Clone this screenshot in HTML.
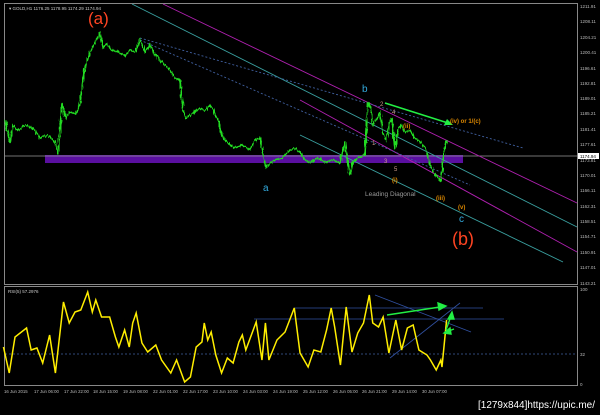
<!DOCTYPE html>
<html><head><meta charset="utf-8"><style>
html,body{margin:0;padding:0;background:#000;width:600px;height:415px;overflow:hidden}
svg{display:block}
text{font-family:"Liberation Sans",sans-serif}
</style></head><body>
<svg width="600" height="415" viewBox="0 0 600 415" xmlns="http://www.w3.org/2000/svg">
<defs>
<filter id="jag" x="-5%" y="-20%" width="110%" height="140%">
<feTurbulence type="fractalNoise" baseFrequency="0.9 0.15" numOctaves="1" seed="3" result="n"/>
<feDisplacementMap in="SourceGraphic" in2="n" scale="5" xChannelSelector="R" yChannelSelector="G"/>
</filter>
</defs>
<rect width="600" height="415" fill="#000"/>
<rect x="4.5" y="3.5" width="573" height="281" fill="none" stroke="#888" stroke-width="1"/>
<rect x="4.5" y="286.5" width="573" height="99" fill="none" stroke="#888" stroke-width="1"/>
<g fill="#bbb" font-size="4.5">
<text x="580" y="8">1211.91</text><text x="580" y="23">1208.11</text><text x="580" y="39">1204.21</text>
<text x="580" y="54">1200.41</text><text x="580" y="70">1196.61</text><text x="580" y="85">1192.81</text>
<text x="580" y="100">1189.01</text><text x="580" y="115">1185.21</text><text x="580" y="131">1181.41</text>
<text x="580" y="146">1177.61</text><text x="580" y="162">1173.81</text><text x="580" y="177">1170.01</text>
<text x="580" y="192">1166.11</text><text x="580" y="208">1162.31</text><text x="580" y="223">1158.51</text>
<text x="580" y="238">1154.71</text><text x="580" y="254">1150.91</text><text x="580" y="269">1147.01</text>
<text x="580" y="285">1143.21</text>
<text x="580" y="291">100</text><text x="580" y="356">32</text><text x="580" y="386">0</text>
</g>
<rect x="578" y="153" width="21" height="6" fill="#fff"/>
<text x="580" y="158" font-size="4.5" fill="#000">1174.94</text>
<text x="9" y="10" font-size="4.5" fill="#ccc">▾ GOLD,H1  1176.25 1178.95 1174.29 1174.94</text>
<text x="8" y="293" font-size="4.5" fill="#ccc">RSI(5) 57.2976</text>
<rect x="45" y="155" width="418" height="8" fill="#5a0fa0"/>
<line x1="5" y1="156" x2="578" y2="156" stroke="#999" stroke-width="0.7"/>
<g fill="none" stroke-width="0.9">
<line x1="163" y1="4" x2="577" y2="203" stroke="#b020b0"/>
<line x1="300" y1="100" x2="577" y2="252" stroke="#b020b0"/>
<line x1="132" y1="4" x2="577" y2="227" stroke="#3aa0a0"/>
<line x1="300" y1="135" x2="563" y2="262" stroke="#3aa0a0"/>
<line x1="140" y1="38" x2="523" y2="148" stroke="#4060a0" stroke-dasharray="2,2"/>
<line x1="140" y1="40" x2="470" y2="185" stroke="#4060a0" stroke-dasharray="2,2"/>
</g>
<g filter="url(#jag)">
<polyline fill="none" stroke="#22dd22" stroke-width="1.6" points="5,120 10,143 13,125 18,130 25,125 33,128 40,138 48,135 55,142 58,155 62,103 66,118 70,112 76,114 80,103 84,72 88,58 92,48 96,40 100,33 103,47 107,44 112,50 118,52 125,56 130,50 135,52 140,40 145,52 150,45 155,55 160,60 165,65 170,70 175,78 180,80 183,110 186,118 190,115 195,112 200,108 205,110 210,105 214,112 218,120 222,135 225,140 230,145 235,148 242,145 250,150 255,140 260,138 263,155 266,168 270,163 275,160 282,158 290,150 295,148 300,152 305,160 310,162 318,158 325,162 333,160 340,163 343,150 345,142 348,165 350,175 353,162 358,158 365,155 368,103 371,108 373,125 377,118 380,112 383,135 386,140 389,125 392,118 395,150 398,130 401,125 405,132 410,130 415,138 420,142 425,148 428,158 431,167 435,175 438,178 441,181 443,160 446,140"/>
</g>
<line x1="385" y1="103" x2="448" y2="123" stroke="#22ee44" stroke-width="1.6"/>
<polygon points="453,125 444,125 447,119" fill="#22ee44"/>
<text x="88" y="24" font-size="17" fill="#ff4422">(a)</text>
<text x="452" y="245" font-size="18" fill="#ff4422">(b)</text>
<text x="263" y="191" font-size="10" fill="#33aadd">a</text>
<text x="362" y="92" font-size="10" fill="#33aadd">b</text>
<text x="459" y="222" font-size="10" fill="#33aadd">c</text>
<text x="365" y="196" font-size="6.5" fill="#999">Leading Diagonal</text>
<g fill="#dd8800" font-size="6" font-weight="bold">
<text x="450" y="123">(iv) or 1/(c)</text>
<text x="403" y="128">(ii)</text>
<text x="436" y="200">(iii)</text>
<text x="458" y="209">(v)</text>
<text x="392" y="182">(i)</text>
<text x="380" y="106" font-weight="normal" fill="#c98">2</text>
<text x="392" y="114" font-weight="normal" fill="#c98">4</text>
<text x="372" y="145" font-weight="normal" fill="#c98">1</text>
<text x="384" y="163" font-weight="normal" fill="#c98">3</text>
<text x="394" y="171" font-weight="normal" fill="#c98">5</text>
</g>
<line x1="5" y1="354" x2="577" y2="354" stroke="#4060a0" stroke-width="0.7" stroke-dasharray="2,2"/>
<g stroke="#3050a0" stroke-width="0.8" fill="none">
<line x1="294" y1="308" x2="483" y2="308"/>
<line x1="254" y1="319" x2="504" y2="319"/>
<line x1="375" y1="295" x2="471" y2="332"/>
<line x1="390" y1="358" x2="460" y2="303"/>
</g>
<g transform="scale(1.154,1)">
<polyline fill="none" stroke="#ffee00" stroke-width="1.5" vector-effect="non-scaling-stroke" points="3,347 8,373 13,337 23,328 27,350 32,348 37,363 43,335 48,373 55,302 60,323 65,312 70,310 76,292 80,312 83,300 88,317 95,317 100,337 103,347 108,330 112,347 115,323 118,313 123,343 128,352 135,345 140,360 148,373 153,360 160,382 165,377 170,347 175,342 177,323 180,340 183,332 187,355 192,373 197,358 202,363 207,342 210,335 213,350 222,322 227,360 230,323 233,360 240,340 247,332 255,308 260,353 267,367 272,350 278,352 283,330 287,308 290,327 295,365 300,307 305,352 310,333 315,323 320,295 323,323 328,327 332,317 337,353 343,320 348,350 353,328 358,325 363,350 370,355 373,360 378,370 382,360 383,367 387,320"/>
</g>
<g stroke="#22ee44" stroke-width="1.4" fill="#22ee44">
<line x1="387" y1="315" x2="440" y2="307"/><polygon points="446,306 438,303 439,310"/>
<line x1="446" y1="330" x2="451" y2="316"/><polygon points="452,312 448,319 454,319"/>
<line x1="446" y1="332" x2="454" y2="329"/><polygon points="444,333 450,328 451,334"/>
</g>
<g fill="#bbb" font-size="4.3">
<text x="4" y="393">16 Jun 2015</text><text x="34" y="393">17 Jun 06:00</text><text x="64" y="393">17 Jun 22:00</text>
<text x="93" y="393">18 Jun 15:00</text><text x="123" y="393">19 Jun 08:00</text><text x="153" y="393">22 Jun 01:00</text>
<text x="183" y="393">22 Jun 17:00</text><text x="213" y="393">23 Jun 10:00</text><text x="243" y="393">24 Jun 03:00</text>
<text x="273" y="393">24 Jun 19:00</text><text x="303" y="393">25 Jun 12:00</text><text x="333" y="393">26 Jun 05:00</text>
<text x="362" y="393">26 Jun 21:00</text><text x="392" y="393">29 Jun 14:00</text><text x="422" y="393">30 Jun 07:00</text>
</g>
<text x="478" y="408" font-size="10" fill="#fff" textLength="117" lengthAdjust="spacingAndGlyphs" font-family="Liberation Mono, monospace">[1279x844]https://upic.me/</text>
</svg>
</body></html>
